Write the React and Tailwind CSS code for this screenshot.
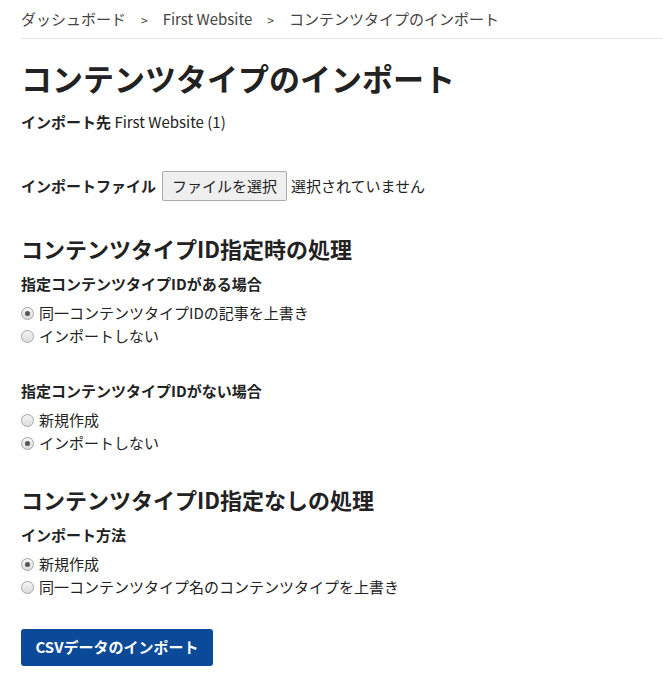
export default function App() {
  const font = { fontFamily: '"Noto Sans CJK JP", "Noto Sans", sans-serif' }
  return (
    <div className="min-h-[700px] w-[663px] bg-white pl-[21px] text-[15px] text-[#222]" style={font}>
      <nav className="flex h-[39px] items-center gap-[15px] border-b border-[#e3e3e3] pt-[1px] text-[15px] text-[#444]">
        <span>ダッシュボード</span>
        <span className="text-[12px]">&gt;</span>
        <span>First Website</span>
        <span className="text-[12px]">&gt;</span>
        <span>コンテンツタイプのインポート</span>
      </nav>

      <h1 className="mt-[17px] text-[31px] font-bold leading-[44px] text-[#222]">コンテンツタイプのインポート</h1>
      <p className="mt-[10px] leading-[23px]">
        <span className="font-bold">インポート先</span> First Website (1)
      </p>

      <div className="mt-[38px] flex h-[30px] items-center">
        <span className="mr-[6px] font-bold">インポートファイル</span>
        <button className="h-[30px] w-[125px] rounded-[2px] border border-[#a9a9a9] bg-[#efefef] text-[15px]">ファイルを選択</button>
        <span className="ml-[4px]">選択されていません</span>
      </div>

      <h2 className="mt-[31px] text-[22px] font-bold leading-[32px]">コンテンツタイプID指定時の処理</h2>
      <h3 className="mt-[8px] font-bold leading-[23px]">指定コンテンツタイプIDがある場合</h3>
      <RadioGroup items={['同一コンテンツタイプIDの記事を上書き', 'インポートしない']} checked={0} />

      <h3 className="mt-[31px] font-bold leading-[23px]">指定コンテンツタイプIDがない場合</h3>
      <RadioGroup items={['新規作成', 'インポートしない']} checked={1} />

      <h2 className="mt-[28px] text-[22px] font-bold leading-[32px]">コンテンツタイプID指定なしの処理</h2>
      <h3 className="mt-[8px] font-bold leading-[23px]">インポート方法</h3>
      <RadioGroup items={['新規作成', '同一コンテンツタイプ名のコンテンツタイプを上書き']} checked={0} />

      <button className="mt-[30px] h-[37px] w-[192px] rounded-[3px] bg-[#0b4a98] text-[15px] font-bold text-white">
        CSVデータのインポート
      </button>
    </div>
  )
}

function RadioGroup({ items, checked }) {
  return (
    <div className="mt-[7px] flex flex-col">
      {items.map((label, i) => (
        <label key={label} className="flex h-[23px] items-center gap-[5px]">
          <span className="flex h-[13px] w-[13px] items-center justify-center rounded-full border border-[#a6a6a6] bg-gradient-to-b from-[#f4f4f4] to-[#dcdcdc]">
            {i === checked && <span className="h-[5px] w-[5px] rounded-full bg-[#555]" />}
          </span>
          <span>{label}</span>
        </label>
      ))}
    </div>
  )
}
